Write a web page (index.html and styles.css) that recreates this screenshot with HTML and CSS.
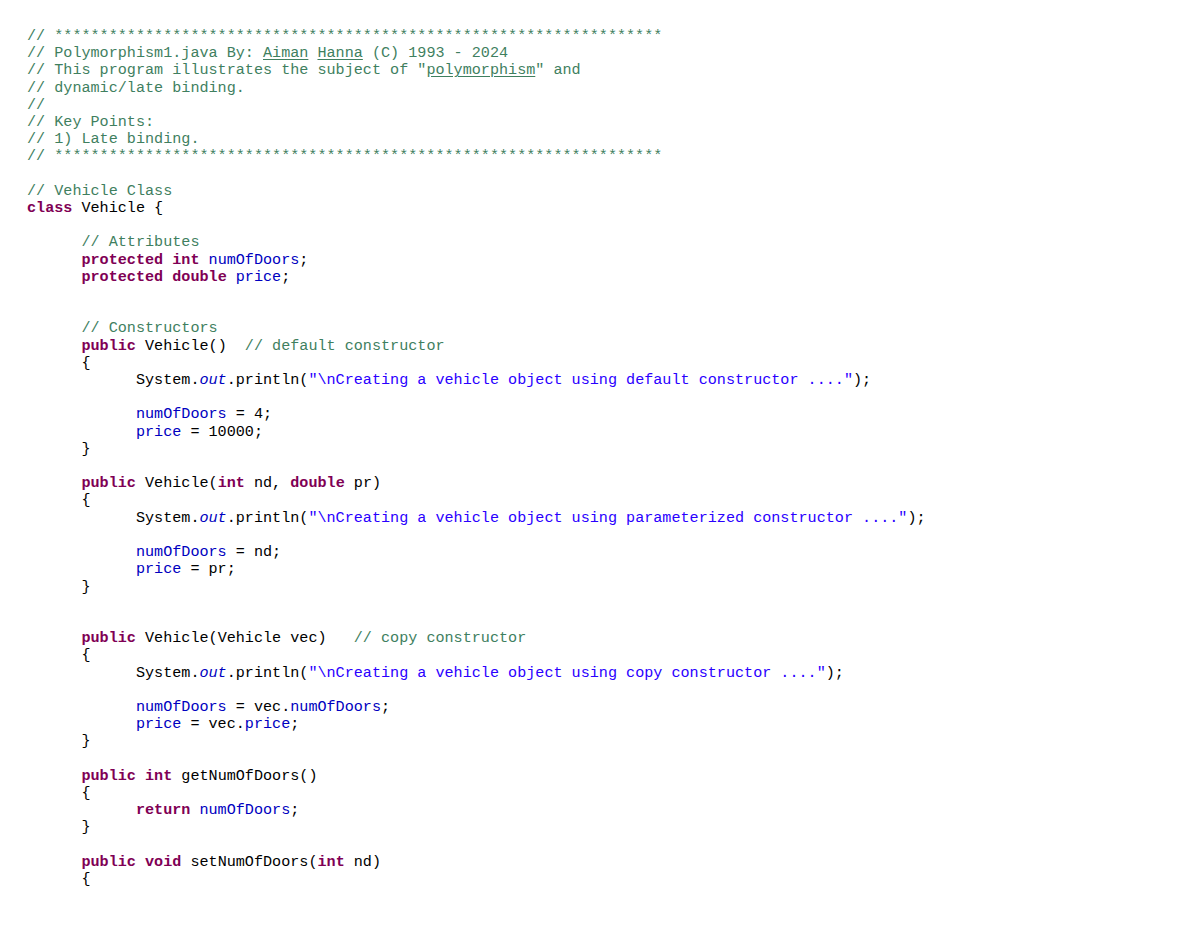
FILE: index.html
```html
<!DOCTYPE html>
<html>
<head>
<meta charset="utf-8">
<link rel="stylesheet" href="styles.css">
</head>
<body>
<pre class="code"><span class="c">// *******************************************************************</span>
<span class="c">// Polymorphism1.java By: <u>Aiman</u> <u>Hanna</u> (C) 1993 - 2024</span>
<span class="c">// This program illustrates the subject of "<u>polymorphism</u>" and</span>
<span class="c">// dynamic/late binding.</span>
<span class="c">//</span>
<span class="c">// Key Points:</span>
<span class="c">// 1) Late binding.</span>
<span class="c">// *******************************************************************</span>

<span class="c">// Vehicle Class</span>
<span class="k">class</span> Vehicle {

      <span class="c">// Attributes</span>
      <span class="k">protected</span> <span class="k">int</span> <span class="f">numOfDoors</span>;
      <span class="k">protected</span> <span class="k">double</span> <span class="f">price</span>;


      <span class="c">// Constructors</span>
      <span class="k">public</span> Vehicle()  <span class="c">// default constructor</span>
      {
            System.<span class="sf">out</span>.println(<span class="s">"\nCreating a vehicle object using default constructor ...."</span>);

            <span class="f">numOfDoors</span> = 4;
            <span class="f">price</span> = 10000;
      }

      <span class="k">public</span> Vehicle(<span class="k">int</span> nd, <span class="k">double</span> pr)
      {
            System.<span class="sf">out</span>.println(<span class="s">"\nCreating a vehicle object using parameterized constructor ...."</span>);

            <span class="f">numOfDoors</span> = nd;
            <span class="f">price</span> = pr;
      }


      <span class="k">public</span> Vehicle(Vehicle vec)   <span class="c">// copy constructor</span>
      {
            System.<span class="sf">out</span>.println(<span class="s">"\nCreating a vehicle object using copy constructor ...."</span>);

            <span class="f">numOfDoors</span> = vec.<span class="f">numOfDoors</span>;
            <span class="f">price</span> = vec.<span class="f">price</span>;
      }

      <span class="k">public</span> <span class="k">int</span> getNumOfDoors()
      {
            <span class="k">return</span> <span class="f">numOfDoors</span>;
      }

      <span class="k">public</span> <span class="k">void</span> setNumOfDoors(<span class="k">int</span> nd)
      {
</pre>
</body>
</html>
```

FILE: styles.css
```css
html, body {
  margin: 0;
  padding: 0;
  background: #ffffff;
}

.code {
  margin: 0;
  padding: 28px 0 0 27px;
  font-family: "Liberation Mono", "Courier New", monospace;
  font-size: 15.13px;
  line-height: 17.2px;
  color: #000000;
  white-space: pre;
}

.c {
  color: #3f7f5f;
}

.c u {
  text-decoration: underline;
  text-decoration-color: #3f7f5f;
  text-underline-offset: 2px;
}

.k {
  color: #7f0055;
  font-weight: bold;
}

.f {
  color: #0000c0;
}

.sf {
  color: #0000c0;
  font-style: italic;
}

.s {
  color: #2a00ff;
}
```
